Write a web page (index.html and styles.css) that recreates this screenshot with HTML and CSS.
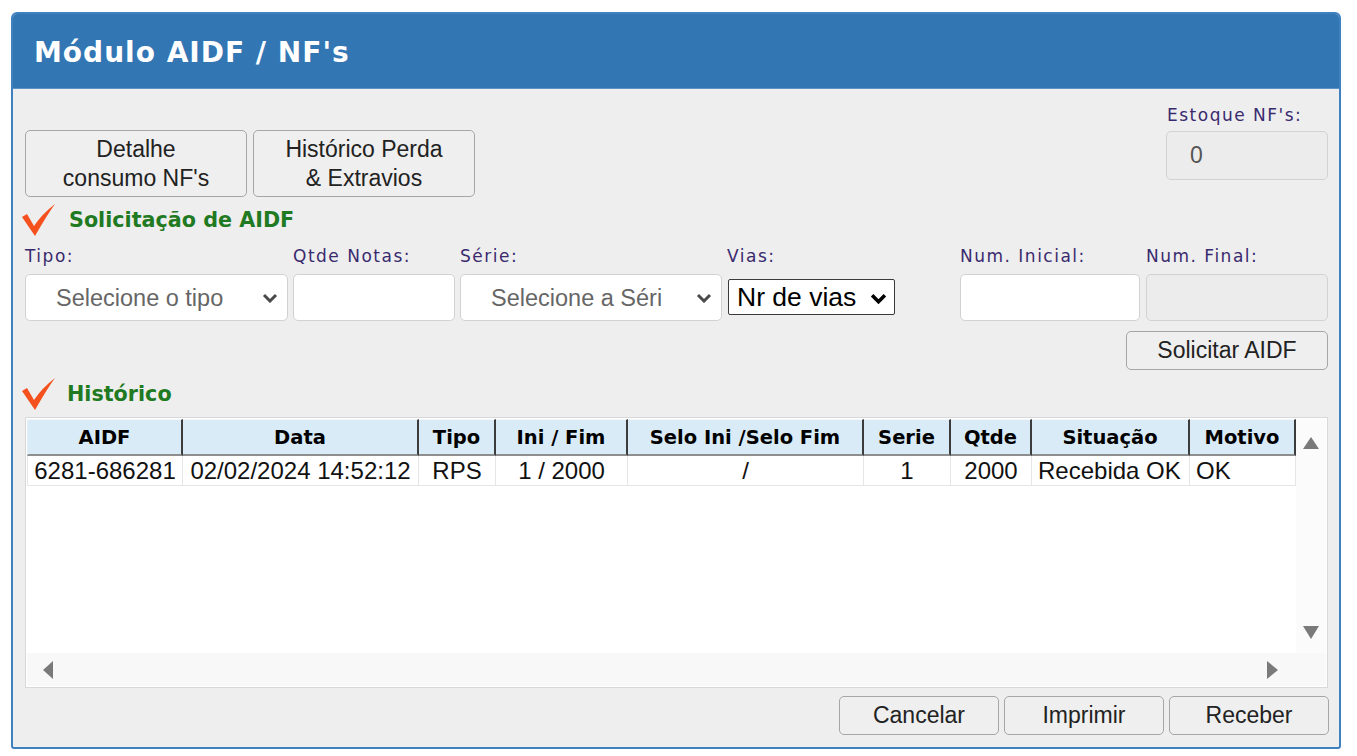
FILE: index.html
```html
<!DOCTYPE html>
<html lang="pt-BR">
<head>
  <meta charset="UTF-8">
  <title>Módulo AIDF / NF's</title>
  <link rel="stylesheet" href="styles.css">
</head>
<body>

<div class="panel">
  <div class="panel-head">
    <h1>Módulo AIDF / NF's</h1>
  </div>

  <div class="panel-body">
    <div class="top-row">
      <div class="top-buttons">
        <button class="btn btn-tall">Detalhe<br>consumo NF's</button>
        <button class="btn btn-tall">Histórico Perda<br>&amp; Extravios</button>
      </div>
      <div class="field f-stock">
        <label>Estoque NF's:</label>
        <input class="inp inp-off inp-stock" value="0" disabled>
      </div>
    </div>

    <div class="section-title">
      <svg class="check" viewBox="0 0 34 33"><path d="M0 13 L5 10 L12 22 Q20 10 33 0 Q25 11 13 32 Z"/></svg>
      <span>Solicitação de AIDF</span>
    </div>

    <div class="form-row">
      <div class="field f-tipo">
        <label>Tipo:</label>
        <div class="sel-wrap">
          <select class="sel"><option>Selecione o tipo</option></select>
          <svg class="chev" viewBox="0 0 16 10"><polyline points="2,2 8,8 14,2"/></svg>
        </div>
      </div>
      <div class="field f-qtde">
        <label>Qtde Notas:</label>
        <input class="inp">
      </div>
      <div class="field f-serie">
        <label>Série:</label>
        <div class="sel-wrap">
          <select class="sel"><option>Selecione a Série</option></select>
          <svg class="chev" viewBox="0 0 16 10"><polyline points="2,2 8,8 14,2"/></svg>
        </div>
      </div>
      <div class="field f-vias">
        <label>Vias:</label>
        <div class="sel-wrap vias-wrap">
          <select class="sel-vias"><option>Nr de vias</option></select>
          <svg class="chev chev-dark" viewBox="0 0 16 10"><polyline points="2,2 8,8 14,2"/></svg>
        </div>
      </div>
      <div class="field f-ini">
        <label>Num. Inicial:</label>
        <input class="inp">
      </div>
      <div class="field f-fim">
        <label>Num. Final:</label>
        <input class="inp inp-off" disabled>
      </div>
    </div>

    <div class="row-right">
      <button class="btn btn-solicitar">Solicitar AIDF</button>
    </div>

    <div class="section-title">
      <svg class="check" viewBox="0 0 34 33"><path d="M0 13 L5 10 L12 22 Q20 10 33 0 Q25 11 13 32 Z"/></svg>
      <span class="hist">Histórico</span>
    </div>

    <div class="grid-box">
      <div class="grid-area">
        <table class="grid">
          <colgroup>
            <col style="width:156px"><col style="width:236px"><col style="width:77px">
            <col style="width:132px"><col style="width:236px"><col style="width:87px">
            <col style="width:81px"><col style="width:158px"><col style="width:106px">
          </colgroup>
          <thead>
            <tr>
              <th>AIDF</th><th>Data</th><th>Tipo</th><th>Ini / Fim</th><th>Selo Ini /Selo Fim</th>
              <th>Serie</th><th>Qtde</th><th>Situação</th><th>Motivo</th>
            </tr>
          </thead>
          <tbody>
            <tr>
              <td>6281-686281</td><td>02/02/2024 14:52:12</td><td>RPS</td><td>1 / 2000</td><td>/</td>
              <td>1</td><td>2000</td><td class="left">Recebida OK</td><td class="left">OK</td>
            </tr>
          </tbody>
        </table>
      </div>
      <div class="vscroll">
        <span class="tri tri-up"></span>
        <span class="tri tri-down"></span>
      </div>
      <div class="hscroll">
        <span class="tri tri-left"></span>
        <span class="tri tri-right"></span>
      </div>
    </div>

    <div class="row-right bottom-buttons">
      <button class="btn btn-foot">Cancelar</button>
      <button class="btn btn-foot">Imprimir</button>
      <button class="btn btn-foot">Receber</button>
    </div>
  </div>
</div>

</body>
</html>
```

FILE: styles.css
```css
body { margin: 0; padding: 12px 0 0 11px; background: #fff; font-family: "Liberation Sans", Arial, sans-serif; color: #222; }

.panel { width: 1330px; box-sizing: border-box; border: 2px solid #3f80c0; border-radius: 6px 6px 3px 3px; background: #eeeeee; overflow: hidden; }
.panel-head { height: 75px; background: #3276b4; display: flex; align-items: center; padding: 2px 0 0 21px; box-sizing: border-box; border-bottom: 1px solid #5c93c6; }
.panel-head h1 { margin: 0; font: bold 28px "DejaVu Sans", Verdana, sans-serif; letter-spacing: 1px; color: #fff; }
.panel-body { padding: 16px 11px 12px 12px; }

/* buttons */
.btn { font-family: "Liberation Sans", Arial, sans-serif; font-size: 23px; color: #222; background: #efefef; border: 1px solid #a6a6a6; border-radius: 5px; padding: 0; cursor: pointer; }
.btn-tall { width: 222px; height: 67px; line-height: 29px; }
.btn-solicitar { width: 202px; height: 39px; }
.btn-foot { width: 160px; height: 39px; }

.top-row { display: flex; justify-content: space-between; align-items: flex-start; height: 91px; }
.top-buttons { display: flex; gap: 6px; margin-top: 25px; }

/* fields */
.field { display: flex; flex-direction: column; }
.field label { font: 17px "DejaVu Sans", Verdana, sans-serif; letter-spacing: 1.5px; color: #3a2a6e; line-height: 20px; height: 20px; white-space: nowrap; }
.f-stock { width: 162px; }
.f-stock label { margin-left: 1px; }
.f-stock .inp { margin-top: 6px; height: 49px; }

.inp { box-sizing: border-box; height: 47px; margin-top: 8px; border: 1px solid #d2d2d2; border-radius: 5px; background: #fff; font: 23px "Liberation Sans", Arial, sans-serif; color: #555; padding: 0 10px; }
.inp-off { background: #ececec; -webkit-text-fill-color: #555; }
.inp-stock { padding-left: 23px; }

.section-title { display: flex; align-items: center; gap: 13px; height: 34px; margin: 7px 0 0 -3px; font: bold 20.7px "DejaVu Sans", Verdana, sans-serif; color: #1f7a22; }
.section-title .hist { margin-left: -2px; }
.check { width: 34px; height: 33px; fill: #f4511e; }

.form-row { display: flex; margin-top: 9px; }
.f-tipo { width: 263px; }
.f-qtde { width: 162px; margin-left: 5px; }
.f-serie { width: 262px; margin-left: 5px; }
.f-vias { width: 168px; margin-left: 5px; }
.f-ini { width: 180px; margin-left: auto; }
.f-fim { width: 182px; margin-left: 6px; }

.sel-wrap { position: relative; margin-top: 8px; height: 47px; }
.sel { appearance: none; -webkit-appearance: none; width: 100%; height: 47px; box-sizing: border-box; border: 1px solid #d2d2d2; border-radius: 5px; background: #fff; font: 23.5px "Liberation Sans", Arial, sans-serif; color: #666; padding: 0 58px 0 30px; }
.chev { position: absolute; right: 10px; top: 19px; width: 16px; height: 10px; fill: none; stroke: #4a4a4a; stroke-width: 3; pointer-events: none; }

.vias-wrap { margin-left: 1px; }
.sel-vias { appearance: none; -webkit-appearance: none; margin-top: 5px; width: 167px; height: 36px; box-sizing: border-box; border: 1px solid #3a3a3a; border-radius: 2px; background: #fff; font: 26.5px "Liberation Sans", Arial, sans-serif; color: #000; padding: 0 30px 0 8px; }
.chev-dark { right: 8px; top: 19px; width: 17px; height: 11px; stroke: #000; stroke-width: 3.4; }

.row-right { display: flex; justify-content: flex-end; margin-top: 10px; }

/* grid */
.grid-box { margin-top: 6px; height: 271px; box-sizing: border-box; border: 1px solid #d8d8d8; padding: 1px; background: #fff; display: grid; grid-template-columns: 1fr 30px; grid-template-rows: 1fr 33px; }
.grid-area { overflow: hidden; }
.grid { width: 1269px; table-layout: fixed; border-collapse: separate; border-spacing: 0; }
.grid th { height: 37px; box-sizing: border-box; padding: 0 2px; background: #d9ebf7; font: bold 19.5px "DejaVu Sans", Verdana, sans-serif; color: #000; text-align: center; white-space: nowrap; overflow: hidden; border-top: 1px solid #f4f8fb; border-right: 2px solid #3c3c3c; border-bottom: 2px solid #8e8e8e; }
.grid th:first-child { border-left: 1px solid #e4eef5; }
.grid td { height: 30px; box-sizing: border-box; padding: 0 6px; font: 24px "Liberation Sans", Arial, sans-serif; color: #111; text-align: center; white-space: nowrap; overflow: hidden; border-right: 1px solid #e6e6e6; border-bottom: 1px solid #e6e6e6; }
.grid td:first-child { border-left: 1px solid #e6e6e6; }
.grid td.left { text-align: left; }

.vscroll { background: #fbfbfb; display: flex; flex-direction: column; justify-content: space-between; align-items: center; padding: 18px 0 14px; }
.hscroll { grid-column: 1 / 3; background: #f8f8f8; display: flex; justify-content: space-between; align-items: center; padding: 0 48px 0 16px; }
.tri { display: block; width: 0; height: 0; }
.tri-up { border-left: 8px solid transparent; border-right: 8px solid transparent; border-bottom: 12px solid #7a7a7a; }
.tri-down { border-left: 8px solid transparent; border-right: 8px solid transparent; border-top: 13px solid #7a7a7a; }
.tri-left { border-top: 9px solid transparent; border-bottom: 9px solid transparent; border-right: 10px solid #7a7a7a; }
.tri-right { border-top: 9px solid transparent; border-bottom: 9px solid transparent; border-left: 11px solid #7a7a7a; }

.bottom-buttons { gap: 5px; margin-top: 8px; margin-right: -1px; }
```
